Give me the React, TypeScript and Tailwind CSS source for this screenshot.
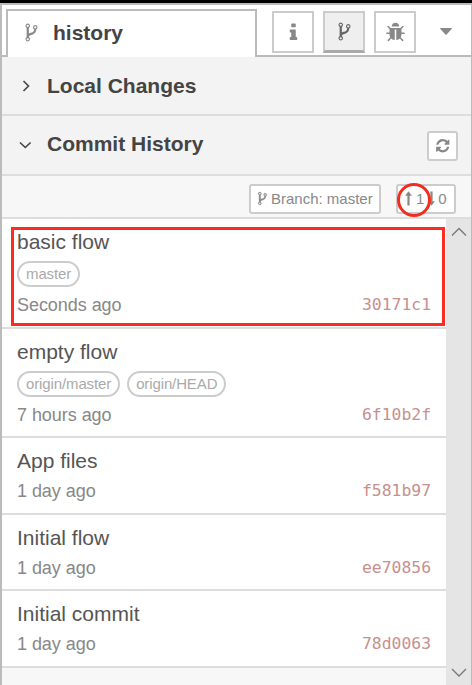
import type { ReactNode } from "react";

const FORK =
  "M672 1472q0-40-28-68t-68-28-68 28-28 68 28 68 68 28 68-28 28-68zm0-1152q0-40-28-68t-68-28-68 28-28 68 28 68 68 28 68-28 28-68zm640 128q0-40-28-68t-68-28-68 28-28 68 28 68 68 28 68-28 28-68zm96 0q0 52-26 96.5t-70 69.5q-2 287-226 414-67 38-203 81-128 40-169.5 71t-41.5 100v26q44 25 70 69.5t26 96.5q0 80-56 136t-136 56-136-56-56-136q0-52 26-96.5t70-69.5v-820q-44-25-70-69.5t-26-96.5q0-80 56-136t136-56 136 56 56 136q0 52-26 96.5t-70 69.5v497q54-26 154-57 55-17 87.5-29.5t70.5-31 59-39.5 40.5-51 28-69.5 8.5-91.5q-44-25-70-69.5t-26-96.5q0-80 56-136t136-56 136 56 56 136z";
const INFO =
  "M1216 1344v128q0 26-19 45t-45 19h-512q-26 0-45-19t-19-45v-128q0-26 19-45t45-19h64v-384h-64q-26 0-45-19t-19-45v-128q0-26 19-45t45-19h384q26 0 45 19t19 45v576h64q26 0 45 19t19 45zm-128-1152v192q0 26-19 45t-45 19h-256q-26 0-45-19t-19-45v-192q0-26 19-45t45-19h256q26 0 45 19t19 45z";
const BUG =
  "M1696 960q0 26-19 45t-45 19h-224q0 171-67 290l208 209q19 19 19 45t-19 45q-18 19-45 19t-45-19l-198-197q-5 5-15 13t-42 28.5-65 36.5-82 29-97 13v-896h-128v896q-51 0-101.5-13.5t-87-33-66-39-43.5-32.5l-15-14-183 207q-20 21-48 21-24 0-43-16-19-18-20.5-44.5t15.5-46.5l202-227q-58-114-58-274h-224q-26 0-45-19t-19-45 19-45 45-19h224v-294l-173-173q-19-19-19-45t19-45 45-19 45 19l173 173h844l173-173q19-19 45-19t45 19 19 45-19 45l-173 173v294h224q26 0 45 19t19 45zm-480-576h-640q0-133 93.5-226.5t226.5-93.5 226.5 93.5 93.5 226.5z";
const REFRESH =
  "M1639 1056q0 5-1 7-64 268-268 434.5t-478 166.5q-146 0-282.5-55t-243.5-157l-129 129q-19 19-45 19t-45-19-19-45v-448q0-26 19-45t45-19h448q26 0 45 19t19 45-19 45l-137 137q71 66 161 102t187 36q134 0 250-65t186-179q11-17 53-117 8-23 30-23h192q13 0 22.5 9.5t9.5 22.5zm25-800v448q0 26-19 45t-45 19h-448q-26 0-45-19t-19-45 19-45l138-138q-148-137-349-137-134 0-250 65t-186 179q-11 17-53 117-8 23-30 23h-199q-13 0-22.5-9.5t-9.5-22.5v-7q65-268 270-434.5t480-166.5q146 0 284 55.5t245 156.5l130-129q19-19 45-19t45 19 19 45z";

function Glyph({ d, className }: { d: string; className: string }) {
  return (
    <svg viewBox="0 0 1792 1792" fill="currentColor" className={`block shrink-0 ${className}`}>
      <path d={d} />
    </svg>
  );
}

function Chevron({ points, className }: { points: string; className: string }) {
  return (
    <svg viewBox="0 0 16 16" fill="none" stroke="currentColor" className={`block size-4 shrink-0 ${className}`}>
      <polyline points={points} />
    </svg>
  );
}

function LongArrow({ className = "" }: { className?: string }) {
  return (
    <svg viewBox="0 0 7 15" fill="currentColor" className={`block h-[15px] w-[7px] shrink-0 ${className}`}>
      <path d="M3.5 0.3L6.9 4.8H4.6V14.5H2.4V4.8H0.1z" />
    </svg>
  );
}

function TabButton({ active, children }: { active?: boolean; children: ReactNode }) {
  return (
    <button
      className={
        active
          ? "flex size-[42px] items-center justify-center border-2 border-b-[3px] border-[#ccc] border-b-[#aaa] bg-[#efefef] text-[#666]"
          : "flex size-[42px] items-center justify-center border-2 border-[#ccc] bg-white text-[#888]"
      }
    >
      {children}
    </button>
  );
}

type Commit = { title: string; tags: string[]; age: string; hash: string; height: string };

const commits: Commit[] = [
  { title: "basic flow", tags: ["master"], age: "Seconds ago", hash: "30171c1", height: "h-[110px]" },
  { title: "empty flow", tags: ["origin/master", "origin/HEAD"], age: "7 hours ago", hash: "6f10b2f", height: "h-[109px]" },
  { title: "App files", tags: [], age: "1 day ago", hash: "f581b97", height: "h-[77px]" },
  { title: "Initial flow", tags: [], age: "1 day ago", hash: "ee70856", height: "h-[76px]" },
  { title: "Initial commit", tags: [], age: "1 day ago", hash: "78d0063", height: "h-[77px]" },
];

function CommitRow({ commit }: { commit: Commit }) {
  return (
    <li className={`flex flex-col border-b-2 border-[#ddd] bg-white pl-[15px] pr-[15px] pt-[11px] ${commit.height}`}>
      <div className="h-[24px] text-[21px] leading-[24px] text-[#555]">{commit.title}</div>
      {commit.tags.length > 0 && (
        <div className="mt-[7px] flex h-[26px] gap-[7px]">
          {commit.tags.map((tag) => (
            <span
              key={tag}
              className="flex h-[25.5px] items-center rounded-full border-2 border-[#ccc] px-[7px] pb-px text-[15px] leading-none tracking-[-0.12px] text-[#aaa]"
            >
              {tag}
            </span>
          ))}
        </div>
      )}
      <div className="mt-[7px] flex h-[22px] items-center justify-between text-[18px] leading-[22px] tracking-[-0.05px] text-[#888]">
        <span>{commit.age}</span>
        <span className="font-['DejaVu_Sans_Mono',monospace] text-[16.4px] tracking-normal text-[#c78f8f]">{commit.hash}</span>
      </div>
    </li>
  );
}

export default function App() {
  return (
    <div className="relative flex h-[685px] w-[472px] flex-col overflow-hidden bg-black pt-[3px] font-['Liberation_Sans',Arial,sans-serif]">
      <div className="flex min-h-0 flex-1 flex-col border-l-2 border-r border-t-2 border-[#bbb] bg-[#f7f7f7]">
        <header className="flex h-[52px] shrink-0 bg-white">
          <div className="w-1 border-b-2 border-[#bbb]" />
          <div className="mt-1 flex w-[251px] items-center border-x-2 border-t-2 border-[#bbb] pb-[3px] pl-[13px] text-[#888]">
            <Glyph d={FORK} className="size-[21px]" />
            <span className="ml-[11px] text-[21px] font-bold leading-6 text-[#444]">history</span>
          </div>
          <div className="flex flex-1 gap-[9px] border-b-2 border-[#bbb] pl-[15px] pt-[6px]">
            <TabButton>
              <Glyph d={INFO} className="size-[21px]" />
            </TabButton>
            <TabButton active>
              <Glyph d={FORK} className="size-[21px]" />
            </TabButton>
            <TabButton>
              <Glyph d={BUG} className="size-[21px]" />
            </TabButton>
            <svg viewBox="0 0 12 7" className="ml-[15px] mt-[17px] h-[7px] w-3 text-[#888]" fill="currentColor">
              <path d="M0.5 0H11.5Q12.2 0.3 11.6 1L6.6 6.6Q6 7.1 5.4 6.6L0.4 1Q-0.2 0.3 0.5 0z" />
            </svg>
          </div>
        </header>

        <section className="flex h-[59px] shrink-0 items-center border-b-2 border-[#ddd] bg-[#f3f3f3] pl-4 text-[#444]">
          <Chevron points="5.5,3 10.5,8 5.5,13" className="stroke-[1.6]" />
          <h2 className="ml-[13px] text-[21px] font-bold leading-6">Local Changes</h2>
        </section>
        <section className="flex h-[60px] shrink-0 items-center border-b-2 border-[#ddd] bg-[#f3f3f3] pl-4 pr-[13px] text-[#444]">
          <Chevron points="2,5.5 7.3,10.5 12.6,5.5" className="stroke-[1.6]" />
          <h2 className="mb-[3px] ml-[13px] flex-1 text-[21px] font-bold leading-6">Commit History</h2>
          <button className="mt-[2px] flex h-[30px] w-[31px] items-center justify-center rounded-[3px] border-2 border-[#ccc] bg-white text-[#888]">
            <Glyph d={REFRESH} className="size-[15.5px]" />
          </button>
        </section>

        <div className="flex h-[43px] shrink-0 justify-end gap-[15px] border-b-2 border-[#ddd] pr-[15px] pt-2 text-[15px] leading-none text-[#888]">
          <button className="flex h-[30px] w-[132px] items-center rounded-[3px] border-2 border-[#ccc] bg-white pb-px pl-[4px]">
            <Glyph d={FORK} className="size-[15px] stroke-current stroke-[30]" />
            <span className="ml-px whitespace-nowrap">Branch: master</span>
          </button>
          <button className="flex h-[30px] w-[60px] items-center rounded-[3px] border-2 border-[#ccc] bg-white pb-px pl-[7px]">
            <LongArrow />
            <span className="ml-[4px]">1</span>
            <LongArrow className="ml-[4px] rotate-180" />
            <span className="ml-[3px]">0</span>
          </button>
        </div>

        <div className="flex min-h-0 flex-1">
          <ul className="min-w-0 flex-1">
            {commits.map((commit) => (
              <CommitRow key={commit.hash} commit={commit} />
            ))}
          </ul>
          <div className="flex w-[25px] flex-col items-center justify-between bg-[#e5e5e5] pb-1 pt-[5px] text-[#777]">
            <Chevron points="1,11.5 8,4.5 15,11.5" className="stroke-[1.3]" />
            <Chevron points="1,4 8,11 15,4" className="stroke-[1.3]" />
          </div>
        </div>
      </div>

      <div className="absolute left-[11px] top-[227px] h-[99px] w-[434px] border-[3px] border-[#fb2c21]" />
      <div className="absolute left-[397px] top-[183px] h-[34px] w-[34px] rounded-[50%] border-[3px] border-[#f22d20]" />
    </div>
  );
}
